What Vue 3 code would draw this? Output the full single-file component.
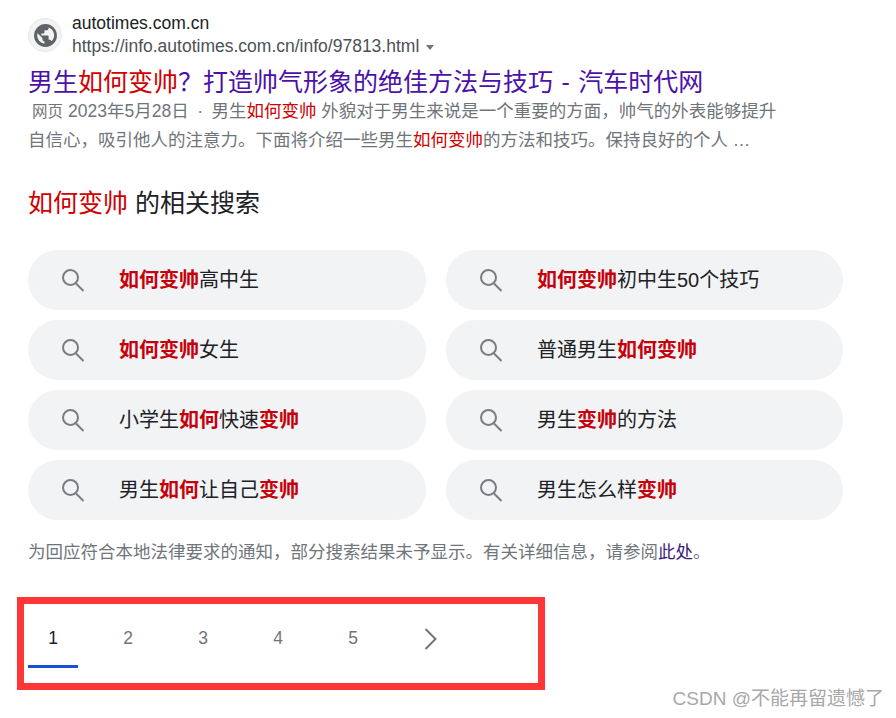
<script setup>
const pills = [
  [[1, '如何变帅'], [0, '高中生']],
  [[1, '如何变帅'], [0, '初中生50个技巧']],
  [[1, '如何变帅'], [0, '女生']],
  [[0, '普通男生'], [1, '如何变帅']],
  [[0, '小学生'], [1, '如何'], [0, '快速'], [1, '变帅']],
  [[0, '男生'], [1, '变帅'], [0, '的方法']],
  [[0, '男生'], [1, '如何'], [0, '让自己'], [1, '变帅']],
  [[0, '男生怎么样'], [1, '变帅']]
]
const pages = [1, 2, 3, 4, 5]
</script>

<template>
  <div class="page">
    <div class="site">
      <div class="favicon">
        <svg width="25" height="25" viewBox="0 0 24 24"><path fill="#5f6368" d="M12 1a11 11 0 1 0 0 22 11 11 0 0 0 0-22zM4 12c0-.8.1-1.500.3-2.200L9 14.500v1c0 1.100.9 2 2 2v2.400A8 8 0 0 1 4 12zm13.900 5.400c-.3-.8-1-1.400-1.900-1.400h-1v-3c0-.6-.4-1-1-1H8v-2h2c.6 0 1-.4 1-1V7h2c1.100 0 2-.9 2-2v-.8a8 8 0 0 1 2.900 13.200z"/></svg>
      </div>
      <div class="site-text">
        <div class="domain">autotimes.com.cn</div>
        <div class="url">https://info.autotimes.com.cn/info/97813.html<span class="caret"></span></div>
      </div>
    </div>
    <div class="title">男生<span class="red">如何变帅</span>？打造帅气形象的绝佳方法与技巧 - 汽车时代网</div>
    <div class="snippet">
      <div><span class="tag">网页</span><span class="date">2023年5月28日</span><span class="dot">·</span>男生<span class="red">如何变帅</span> 外貌对于男生来说是一个重要的方面，帅气的外表能够提升</div>
      <div>自信心，吸引他人的注意力。下面将介绍一些男生<span class="red">如何变帅</span>的方法和技巧。保持良好的个人 …</div>
    </div>
    <h2 class="related"><span class="red">如何变帅</span> 的相关搜索</h2>
    <div class="grid">
      <div v-for="(pill, i) in pills" :key="i" class="pill">
        <svg class="search" width="24" height="24" viewBox="0 0 24 24" fill="none" stroke="#7a7c80" stroke-width="2"><circle cx="9.500" cy="9.500" r="7.500"/><path d="M15 15.500l7.500 7.500"/></svg>
        <span class="pill-text"><span v-for="(part, j) in pill" :key="j" :class="{ hl: part[0] }">{{ part[1] }}</span></span>
      </div>
    </div>
    <div class="notice">为回应符合本地法律要求的通知，部分搜索结果未予显示。有关详细信息，请参阅<span class="link">此处</span>。</div>
    <div class="box">
      <div v-for="p in pages" :key="p" class="num" :class="{ on: p === 1 }">{{ p }}</div>
      <svg class="next" width="13" height="22" viewBox="0 0 13 22" fill="none" stroke="#70757a" stroke-width="2"><path d="M1.500 1l10 10-10 10"/></svg>
    </div>
    <div class="mark">CSDN @不能再留遗憾了</div>
  </div>
</template>

<style>
html, body { margin: 0; background: #fff; }
</style>

<style scoped>
.page {
  position: relative;
  width: 896px;
  height: 718px;
  box-sizing: border-box;
  padding: 12px 0 0 28px;
  overflow: hidden;
  font-family: "Liberation Sans", "Noto Sans CJK SC", sans-serif;
  color: #202124;
}
.site { display: flex; align-items: center; gap: 10px; }
.favicon {
  width: 34px; height: 34px; border-radius: 50%;
  background: #f1f3f4; border: 1px solid #e8e8e8; box-sizing: border-box;
  display: flex; align-items: center; justify-content: center;
}
.domain { font-size: 17.500px; line-height: 23px; }
.url { font-size: 17.500px; line-height: 23px; color: #4d5156; }
.caret {
  display: inline-block; margin-left: 7px; vertical-align: 2px;
  border-left: 4.500px solid transparent; border-right: 4.500px solid transparent; border-top: 5px solid #70757a;
}
.title { margin-top: 9px; font-size: 25px; line-height: 30px; color: #4b11a8; white-space: nowrap; word-spacing: 1.500px; }
.red { color: #d00000; }
.snippet { font-size: 17.500px; line-height: 29px; color: #70757a; white-space: nowrap; }
.tag { font-size: 15.500px; margin-left: 4px; }
.date { margin-left: 5px; }
.dot { margin: 0 8.500px; }
.related { margin: 32px 0 0; font-size: 25px; line-height: 32px; font-weight: 400; }
.grid {
  display: grid; grid-template-columns: 398px 397px; column-gap: 20px; row-gap: 10px; margin-top: 31px;
}
.pill {
  height: 60px; border-radius: 30px; background: #f1f3f4;
  display: flex; align-items: center; padding-left: 33px; gap: 34px;
  font-size: 20px; white-space: nowrap;
}
.pill-text { padding-bottom: 4px; }
.hl { color: #c5000b; font-weight: 700; }
.notice { margin-top: 19px; font-size: 17.500px; line-height: 26px; color: #70757a; white-space: nowrap; }
.link { color: #3c1a78; }
.box {
  margin: 32px 0 0 -11px; width: 528px; height: 93px; box-sizing: border-box;
  border: 7px solid #ff3636; display: flex; align-items: flex-start; padding: 0 0 0 4px;
}
.num {
  width: 50px; height: 64px; margin-right: 25px; box-sizing: border-box; padding-top: 24px;
  text-align: center; font-size: 17.500px; line-height: 21px; color: #70757a;
}
.num.on { color: #202124; border-bottom: 3px solid #1a4fd8; }
.next { margin-top: 24px; margin-left: 21px; }
.mark { position: absolute; right: 12px; bottom: 7px; font-size: 19px; line-height: 24px; color: #a8a8a8; }
</style>
